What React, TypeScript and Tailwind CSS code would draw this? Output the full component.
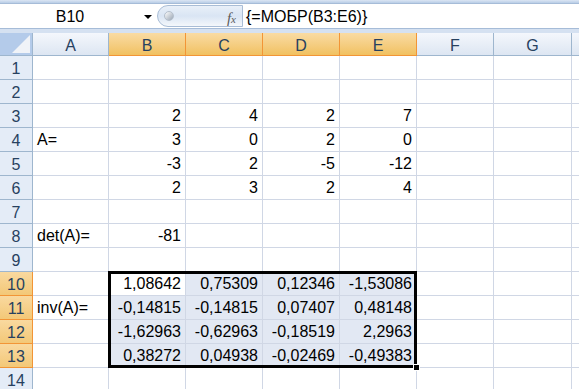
import React from "react";

const cols = [
  { name: "A", w: 76 },
  { name: "B", w: 77 },
  { name: "C", w: 77 },
  { name: "D", w: 77 },
  { name: "E", w: 77 },
  { name: "F", w: 77 },
  { name: "G", w: 78 },
  { name: "", w: 80 },
];

const data: Record<number, string[]> = {
  3: ["", "2", "4", "2", "7"],
  4: ["A=", "3", "0", "2", "0"],
  5: ["", "-3", "2", "-5", "-12"],
  6: ["", "2", "3", "2", "4"],
  8: ["det(A)=", "-81"],
  10: ["", "1,08642", "0,75309", "0,12346", "-1,53086"],
  11: ["inv(A)=", "-0,14815", "-0,14815", "0,07407", "0,48148"],
  12: ["", "-1,62963", "-0,62963", "-0,18519", "2,2963"],
  13: ["", "0,38272", "0,04938", "-0,02469", "-0,49383"],
};

const font = { fontFamily: '"Liberation Sans", Arial, sans-serif' };

function FormulaBar() {
  return (
    <div className="flex flex-col">
      <div className="h-[4px] bg-gradient-to-b from-[#dbe6f4] to-[#b9cde6] border-b border-[#a6bcd8]" />
      <div className="flex h-[24px] bg-white">
        <div className="w-[157px] flex items-center relative">
          <span className="w-[140px] text-center text-[16px] leading-[16px] pt-[2px] text-black">B10</span>
          <span className="absolute left-[144px] top-[11px] w-0 h-0 border-l-[4px] border-r-[4px] border-t-[4px] border-l-transparent border-r-transparent border-t-black" />
        </div>
        <div className="w-[86px] h-[22px] mt-[1px] rounded-l-full bg-gradient-to-b from-[#e9f0f9] via-[#d9e5f4] to-[#f4f7fb] border border-[#a9bdd6] flex items-center relative">
          <span className="ml-[6px] w-[10px] h-[10px] rounded-full bg-gradient-to-br from-white to-[#9aa6b4] border border-[#b4bfcc]" />
          <span
            className="absolute right-[6px] top-[1px] text-[15px] italic text-[#5a5a5a]"
            style={{ fontFamily: '"Liberation Serif", serif' }}
          >
            f<span className="text-[11px]">x</span>
          </span>
        </div>
        <div className="flex-1 flex items-center pl-[3px] pt-[2px] text-[16px] leading-[16px] text-black">
          {"{=МОБР(B3:E6)}"}
        </div>
      </div>
      <div className="h-[5px] bg-[#d5e1f1] border-t border-[#a6bcd8]" />
    </div>
  );
}

function HeaderRow() {
  return (
    <div className="flex h-[23px]">
      <div className="w-[33px] shrink-0 bg-[#b4cbea] border-r border-b border-[#9eb6ce] relative overflow-hidden">
        <svg className="absolute right-[2px] bottom-[2px]" width="18" height="18">
          <polygon points="18,0 18,18 0,18" fill="#f0f3f8" />
        </svg>
      </div>
      {cols.map((c, i) => {
        const sel = i >= 1 && i <= 4;
        return (
          <div
            key={i}
            style={{ width: c.w }}
            className={
              "shrink-0 flex items-center justify-center pt-[3px] text-[16px] leading-[16px] text-[#27415f] border-r border-b " +
              (sel
                ? "bg-gradient-to-b from-[#f9dba3] to-[#f1c160] border-[#f29536]"
                : "bg-gradient-to-b from-[#f4f7fc] to-[#dde6f2] border-[#9eb6ce]")
            }
          >
            {c.name}
          </div>
        );
      })}
    </div>
  );
}

function Row({ n }: { n: number }) {
  const sel = n >= 10 && n <= 13;
  const vals = data[n] || [];
  return (
    <div className="flex h-[24px]">
      <div
        className={
          "w-[33px] shrink-0 flex items-center justify-center pt-[3px] text-[16px] leading-[16px] text-[#27415f] border-r border-b " +
          (sel
            ? "bg-gradient-to-b from-[#f9d99f] to-[#f3c877] border-[#f29536]"
            : "bg-[#e4ecf7] border-[#9eb6ce]")
        }
      >
        {n}
      </div>
      {cols.map((c, i) => {
        const inRange = sel && i >= 1 && i <= 4;
        const active = n === 10 && i === 1;
        const v = vals[i] || "";
        return (
          <div
            key={i}
            style={{ width: c.w }}
            className={
              "shrink-0 flex items-end pb-[3px] px-[4px] text-[16px] leading-[16px] text-black border-r border-b border-[#d0d7e5] whitespace-nowrap " +
              (i === 0 ? "justify-start " : "justify-end ") +
              (inRange && !active ? "bg-[#e2e8f3]" : "bg-white")
            }
          >
            {v}
          </div>
        );
      })}
    </div>
  );
}

export default function App() {
  const rows = Array.from({ length: 14 }, (_, i) => i + 1);
  return (
    <div className="w-[579px] h-[389px] overflow-hidden bg-white relative" style={font}>
      <FormulaBar />
      <HeaderRow />
      <div className="relative">
        {rows.map((n) => (
          <Row key={n} n={n} />
        ))}
        <div className="absolute left-[108px] top-[215px] w-[309px] h-[97px] border-[3px] border-black pointer-events-none" />
        <div className="absolute left-[413px] top-[308px] w-[7px] h-[7px] bg-black border border-white pointer-events-none" />
      </div>
    </div>
  );
}
